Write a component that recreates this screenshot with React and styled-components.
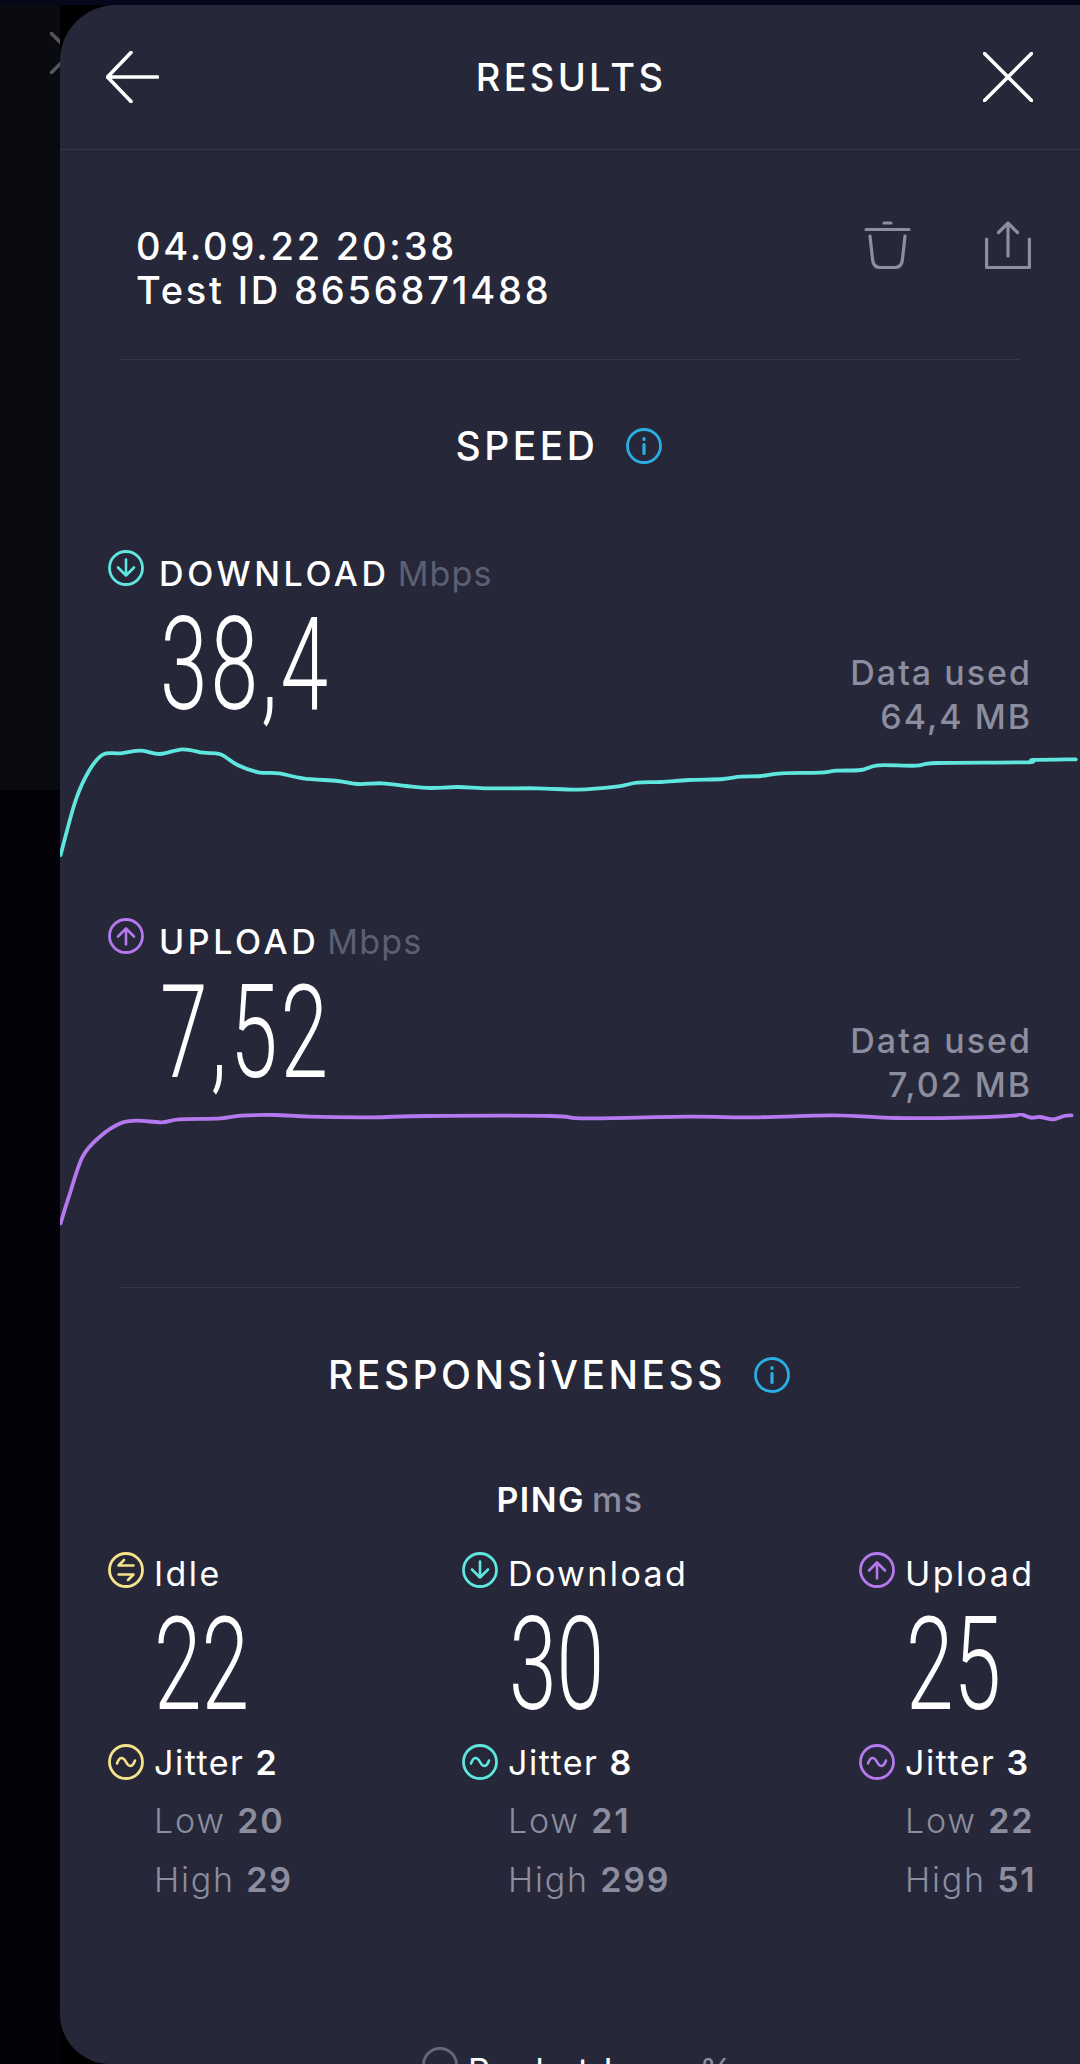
import React from "react";
import styled, { createGlobalStyle } from "styled-components";

const GlobalStyle = createGlobalStyle`
  html, body {
    margin: 0;
    padding: 0;
    background: #000;
  }
  body {
    width: 1080px;
    height: 2064px;
    overflow: hidden;
    font-family: Inter, "Open Sans", sans-serif;
  }
`;

const Page = styled.div`
  width: 1080px;
  height: 2064px;
  padding-top: 5px;
  box-sizing: border-box;
  background: #06071a;
  display: flex;
  overflow: hidden;
`;

const Gutter = styled.div`
  width: 60px;
  flex: none;
  box-sizing: border-box;
  padding: 27px 0 0 50px;
  background: linear-gradient(to bottom, #0a0b10 785px, #020208 785px);
  svg {
    display: block;
  }
`;

const PanelBack = styled.div`
  flex: 1;
  display: flex;
  background: #000;
`;

const Panel = styled.main`
  flex: 1;
  height: 2059px;
  overflow: hidden;
  background: #262839;
  border-radius: 56px 0 0 50px;
`;

const Header = styled.header`
  height: 144px;
  padding: 0 47px 0 46px;
  display: flex;
  align-items: center;
  justify-content: space-between;
  border-bottom: 1px solid #35384a;
  color: #fff;
`;

const Title = styled.h1`
  margin: 0;
  font-size: 38px;
  font-weight: 500;
  letter-spacing: 3.3px;
`;

const MetaRow = styled.div`
  padding: 74px 49px 47px 76px;
  display: flex;
  justify-content: space-between;
  align-items: flex-start;
`;

const MetaText = styled.div`
  font-size: 38px;
  font-weight: 500;
  line-height: 44px;
  letter-spacing: 2.8px;
  color: #fff;
`;

const MetaActions = styled.div`
  display: flex;
  gap: 74px;
  margin-top: -3px;
  svg {
    display: block;
  }
`;

const Divider = styled.hr`
  margin: ${(p) => p.$top || 0}px 60px 0;
  border: 0;
  height: 1px;
  background: #35384a;
`;

const SectionHead = styled.div`
  margin-top: ${(p) => p.$top}px;
  padding-right: 22px;
  display: flex;
  justify-content: center;
  align-items: center;
  gap: 28px;
`;

const SectionTitle = styled.h2`
  margin: 0;
  font-size: 39px;
  line-height: 44px;
  font-weight: 500;
  letter-spacing: 3.5px;
  color: #fff;
`;

const Metric = styled.section`
  margin-top: ${(p) => p.$top}px;
`;

const MetricLabel = styled.div`
  padding-left: 48px;
  height: 36px;
  display: flex;
  align-items: center;
  gap: 15px;
`;

const LabelText = styled.span`
  padding-top: 10px;
  font-size: 34px;
  font-weight: 500;
  letter-spacing: 3.6px;
  color: #fff;
  small {
    margin-left: 8px;
    font-size: 34px;
    font-weight: 400;
    letter-spacing: 1.2px;
    color: #5d5f73;
  }
`;

const MetricBody = styled.div`
  padding: 33px 48px 0 100px;
  height: 120px;
  display: flex;
  justify-content: space-between;
  align-items: flex-start;
`;

const BigNumber = styled.div`
  font-family: Roboto, "Liberation Sans", sans-serif;
  font-weight: 300;
  font-size: 130px;
  line-height: 92px;
  letter-spacing: 4.5px;
  color: #fff;
  white-space: nowrap;
  transform: scaleX(0.66);
  transform-origin: left top;
  width: 165px;
`;

const DataUsed = styled.div`
  margin-top: 32px;
  font-size: 34px;
  font-weight: 500;
  line-height: 44px;
  letter-spacing: 2px;
  text-align: right;
  color: #8c8d9f;
`;

const Chart = styled.svg`
  display: block;
  margin-top: 6px;
`;

const PingHead = styled.div`
  margin-top: 81px;
  text-align: center;
  font-size: 34px;
  line-height: 44px;
  font-weight: 600;
  letter-spacing: 1.5px;
  color: #fff;
  small {
    margin-left: 7px;
    font-size: 34px;
    font-weight: 500;
    color: #8c8d9f;
  }
`;

const PingGrid = styled.div`
  margin-top: 30px;
  padding-left: 48px;
  display: grid;
  grid-template-columns: 354px 397px 1fr;
`;

const PingColumn = styled.div`
  display: flex;
  flex-direction: column;
`;

const PingRow = styled.div`
  height: 36px;
  display: flex;
  align-items: center;
  gap: 10px;
  font-size: 34px;
  font-weight: 400;
  letter-spacing: ${(p) => p.$spacing}px;
  color: #fff;
  white-space: nowrap;
  span {
    padding-top: ${(p) => p.$drop || 0}px;
  }
  b {
    font-weight: 600;
  }
`;

const PingNumber = styled(BigNumber)`
  margin: 31px 0 33px ${(p) => p.$left}px;
  width: 90px;
  letter-spacing: 0;
`;

const StatLine = styled.div`
  margin-left: 46px;
  margin-top: ${(p) => p.$top}px;
  height: 40px;
  line-height: 40px;
  font-size: 34px;
  font-weight: 300;
  letter-spacing: 1.8px;
  color: #8c8d9f;
  white-space: nowrap;
  b {
    font-weight: 600;
  }
`;

const PacketRow = styled.div`
  margin-top: 147px;
  padding-left: 362px;
  display: flex;
  align-items: flex-start;
  gap: 10px;
  font-size: 34px;
  line-height: 36px;
  letter-spacing: 2.4px;
  color: #fff;
  span {
    padding-top: 6px;
  }
  small {
    margin-left: 11px;
    font-size: 34px;
    color: #8c8d9f;
  }
`;

const TEAL = "#5fe6df";
const PURPLE = "#b678ee";
const YELLOW = "#f5e28a";
const BLUE = "#2aaee6";
const GREY = "#666878";

const GLYPHS = {
  down: "M18 9.5V25.5M10 17.5L18 25.5L26 17.5",
  up: "M18 26.5V10.5M10 18.5L18 10.5L26 18.5",
  idle: "M25.5 13.5H10.5L16 8M10.5 22.5H25.5L20 28",
  jitter: "M9 19.5C11.5 12.5 15 12.5 18 18C21 23.5 24.5 23.5 27 16.5",
  info: "M18 16.5V25.5M18 10.5V11.5",
};

function CircleIcon({ kind, color }) {
  const weight = kind === "info" ? 3.2 : 2.6;
  return (
    <svg width="36" height="36" viewBox="0 0 36 36" fill="none" style={{ flex: "none" }}>
      <circle cx="18" cy="18" r="16.5" stroke={color} strokeWidth="2.8" />
      {kind && (
        <path d={GLYPHS[kind]} stroke={color} strokeWidth={weight} strokeLinecap="round" strokeLinejoin="round" />
      )}
    </svg>
  );
}

// traced off the reference, in the crop's stretched coordinates
const DOWNLOAD_LINE = [
  [88, 1005], [110, 840], [130, 750], [150, 703], [175, 700], [205, 692], [232, 702],
  [265, 688], [295, 698], [320, 703], [345, 735], [375, 757], [405, 760], [440, 775],
  [490, 783], [520, 792], [555, 790], [590, 798], [625, 804], [665, 801], [710, 805],
  [780, 805], [840, 809], [895, 800], [925, 788], [960, 786], [1000, 780], [1050, 777],
  [1075, 770], [1105, 768], [1135, 760], [1190, 758], [1215, 752], [1250, 750],
  [1275, 736], [1330, 737], [1360, 729], [1490, 727], [1500, 720], [1562, 718],
];

const UPLOAD_LINE = [
  [88, 1030], [100, 950], [120, 830], [145, 770], [175, 730], [200, 722], [235, 727],
  [260, 718], [320, 715], [350, 707], [400, 705], [450, 710], [540, 712], [620, 708],
  [800, 708], [850, 715], [1000, 710], [1100, 712], [1210, 706], [1300, 714], [1400, 713],
  [1470, 707], [1482, 703], [1497, 713], [1510, 711], [1530, 718], [1545, 708], [1556, 706],
];

// catmull-rom through the traced points so the line reads as smooth
function smoothPath(pts) {
  let d = `M${pts[0][0]} ${pts[0][1]}`;
  for (let i = 0; i < pts.length - 1; i++) {
    const p0 = pts[i - 1] || pts[i];
    const p1 = pts[i];
    const p2 = pts[i + 1];
    const p3 = pts[i + 2] || p2;
    const c1x = p1[0] + (p2[0] - p0[0]) / 6;
    const c1y = p1[1] + (p2[1] - p0[1]) / 6;
    const c2x = p2[0] - (p3[0] - p1[0]) / 6;
    const c2y = p2[1] - (p3[1] - p1[1]) / 6;
    d += `C${c1x.toFixed(1)} ${c1y.toFixed(1)} ${c2x.toFixed(1)} ${c2y.toFixed(1)} ${p2[0].toFixed(1)} ${p2[1].toFixed(1)}`;
  }
  return d;
}

function SpeedChart({ points, color, offset }) {
  const mapped = points.map(([x, y]) => [x / 1.452 - 60, y / 3 + offset]);
  return (
    <Chart width="1020" height="115" viewBox="0 0 1020 115" fill="none">
      <path d={smoothPath(mapped)} stroke={color} strokeWidth="3.8" strokeLinejoin="round" strokeLinecap="round" />
    </Chart>
  );
}

function SpeedMetric({ top, icon, color, label, value, used, points, offset }) {
  return (
    <Metric $top={top}>
      <MetricLabel>
        <CircleIcon kind={icon} color={color} />
        <LabelText>
          {label}
          <small>Mbps</small>
        </LabelText>
      </MetricLabel>
      <MetricBody>
        <BigNumber>{value}</BigNumber>
        <DataUsed>
          Data used
          <br />
          {used}
        </DataUsed>
      </MetricBody>
      <SpeedChart points={points} color={color} offset={offset} />
    </Metric>
  );
}

function PingStat({ icon, color, label, value, left, jitter, low, high }) {
  return (
    <PingColumn>
      <PingRow $drop={7} $spacing={2.4}>
        <CircleIcon kind={icon} color={color} />
        <span>{label}</span>
      </PingRow>
      <PingNumber $left={left}>{value}</PingNumber>
      <PingRow $spacing={1.5}>
        <CircleIcon kind="jitter" color={color} />
        <span>
          Jitter <b>{jitter}</b>
        </span>
      </PingRow>
      <StatLine $top={21}>
        Low <b>{low}</b>
      </StatLine>
      <StatLine $top={19}>
        High <b>{high}</b>
      </StatLine>
    </PingColumn>
  );
}

export default function App() {
  return (
    <>
      <GlobalStyle />
      <Page>
        <Gutter>
          <svg width="10" height="42" viewBox="0 0 10 42" fill="none">
            <path d="M0 0L12 12M0 42L12 30" stroke="#55565c" strokeWidth="3.5" />
          </svg>
        </Gutter>
        <PanelBack>
          <Panel>
            <Header>
              <svg width="53" height="52" viewBox="0 0 53 52" fill="none">
                <path d="M25 1.5L1.5 26L25 50.5M1.5 26H51.5" stroke="#fff" strokeWidth="3.6" strokeLinecap="round" strokeLinejoin="round" />
              </svg>
              <Title>RESULTS</Title>
              <svg width="50" height="50" viewBox="0 0 50 50" fill="none">
                <path d="M1.5 1.5L48.5 48.5M48.5 1.5L1.5 48.5" stroke="#fff" strokeWidth="3.6" strokeLinecap="round" />
              </svg>
            </Header>

            <MetaRow>
              <MetaText>
                04.09.22 20:38
                <br />
                Test ID 8656871488
              </MetaText>
              <MetaActions>
                <svg width="47" height="48" viewBox="0 0 47 48" fill="none" stroke="#8c8d9f" strokeWidth="3.2" strokeLinecap="round" strokeLinejoin="round">
                  <path d="M20 2H27M2 8.5H45M6 15L8.5 38C9 44 12 46.5 16 46.5H31C35 46.5 38 44 38.5 38L41 15" />
                </svg>
                <svg width="46" height="48" viewBox="0 0 46 48" fill="none" stroke="#8c8d9f" strokeWidth="3.2" strokeLinecap="round" strokeLinejoin="round">
                  <path d="M23 35V2M13.5 11.5L23 2L32.5 11.5M1.6 18V46.5H44.4V18" />
                </svg>
              </MetaActions>
            </MetaRow>

            <Divider />

            <SectionHead $top={64}>
              <SectionTitle>SPEED</SectionTitle>
              <CircleIcon kind="info" color={BLUE} />
            </SectionHead>

            <SpeedMetric
              top={82}
              icon="down"
              color={TEAL}
              label="DOWNLOAD"
              value="38,4"
              used="64,4 MB"
              points={DOWNLOAD_LINE}
              offset={-225}
            />
            <SpeedMetric
              top={58}
              icon="up"
              color={PURPLE}
              label="UPLOAD"
              value="7,52"
              used="7,02 MB"
              points={UPLOAD_LINE}
              offset={-233}
            />

            <Divider $top={59} />

            <SectionHead $top={65}>
              <SectionTitle>RESPONSİVENESS</SectionTitle>
              <CircleIcon kind="info" color={BLUE} />
            </SectionHead>

            <PingHead>
              PING<small>ms</small>
            </PingHead>

            <PingGrid>
              <PingStat icon="idle" color={YELLOW} label="Idle" value="22" left={46} jitter="2" low="20" high="29" />
              <PingStat icon="down" color={TEAL} label="Download" value="30" left={47} jitter="8" low="21" high="299" />
              <PingStat icon="up" color={PURPLE} label="Upload" value="25" left={47} jitter="3" low="22" high="51" />
            </PingGrid>

            <PacketRow>
              <CircleIcon color={GREY} />
              <span>
                Packet Loss<small>%</small>
              </span>
            </PacketRow>
          </Panel>
        </PanelBack>
      </Page>
    </>
  );
}
